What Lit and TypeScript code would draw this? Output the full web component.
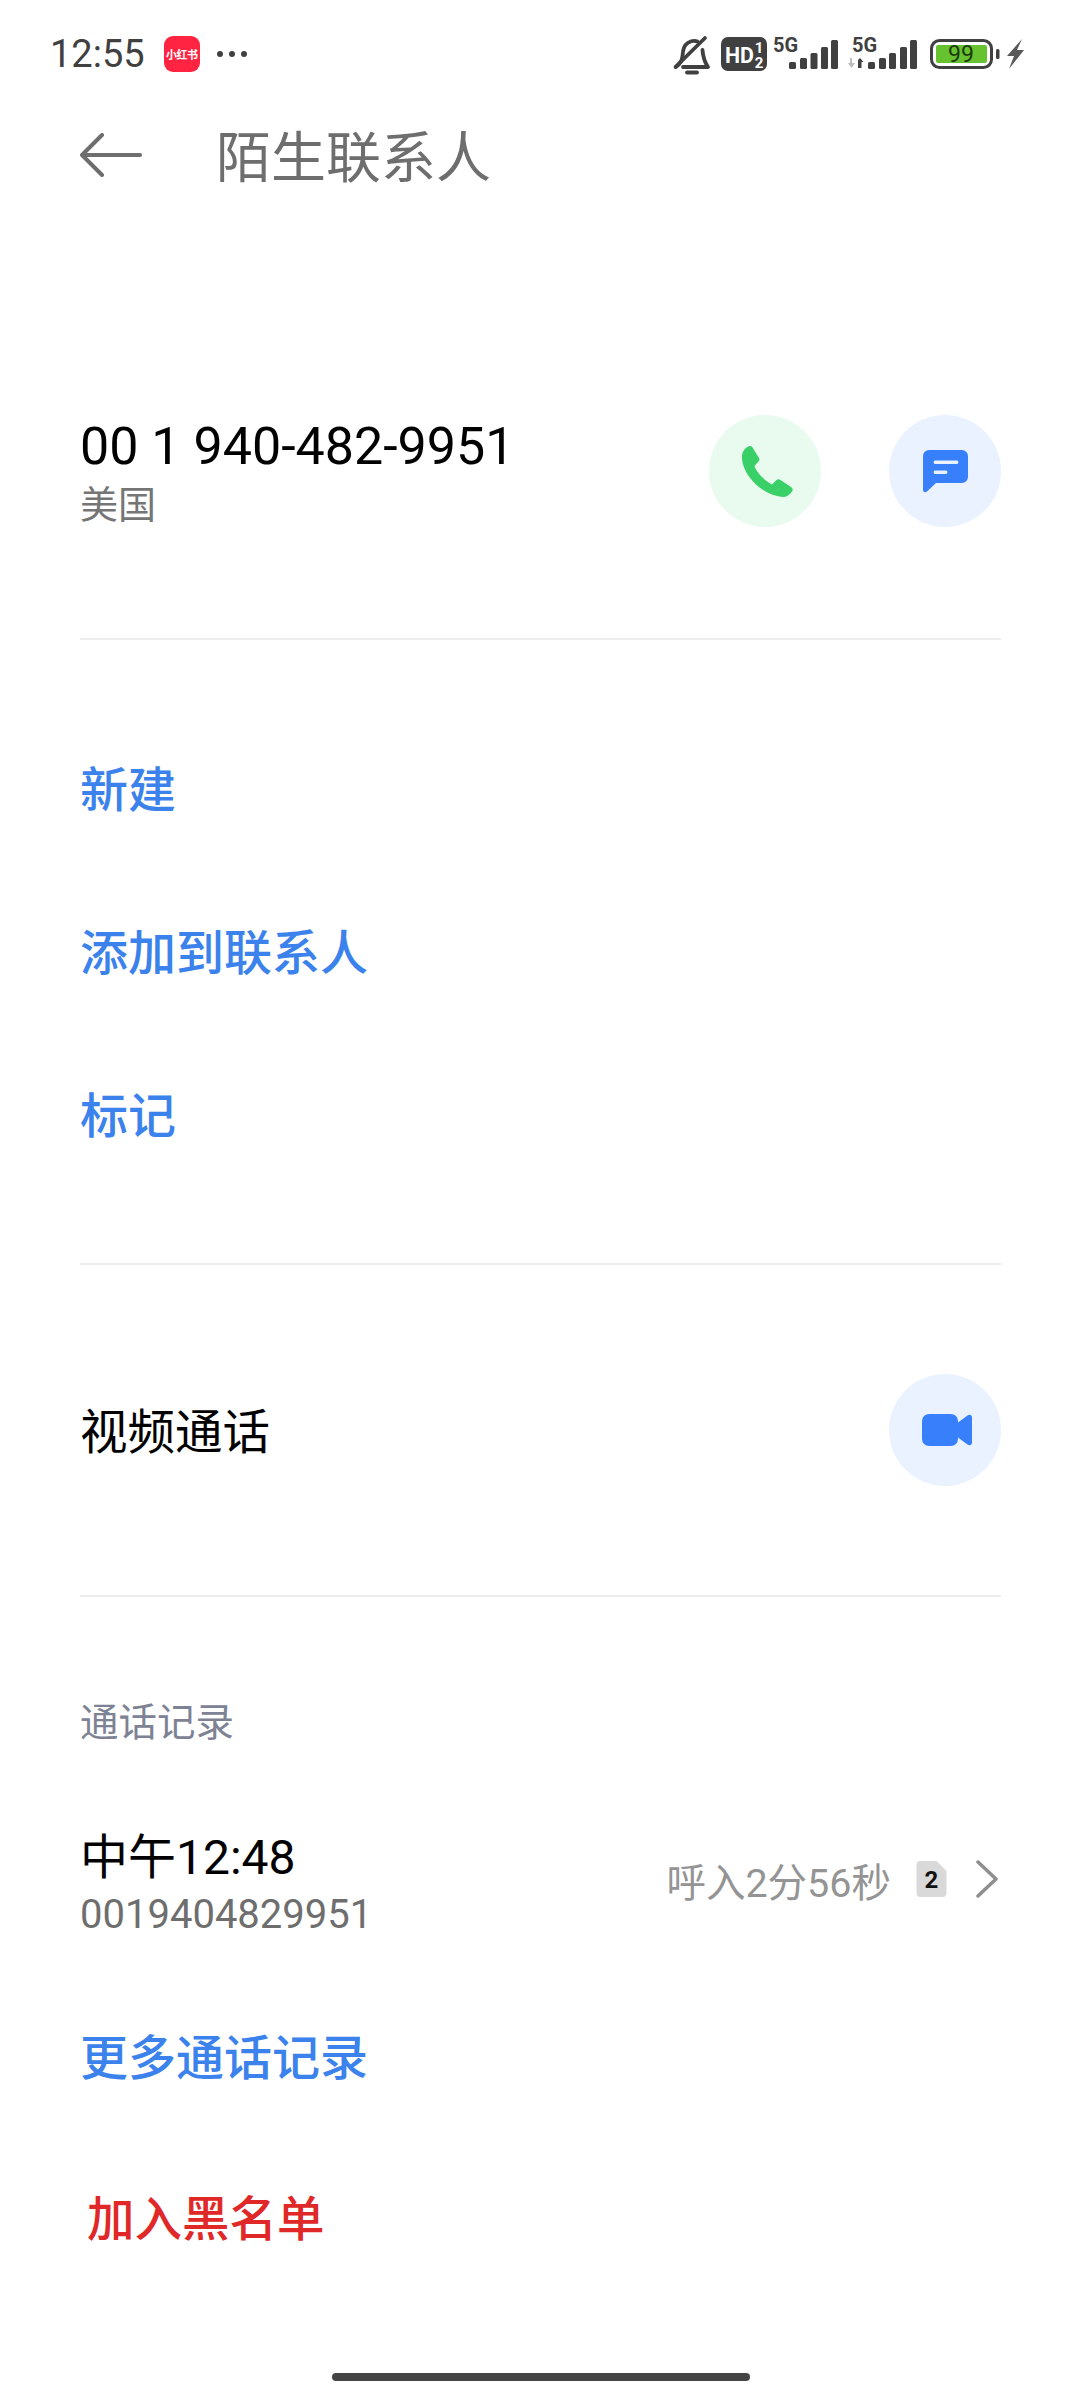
import { LitElement, html, css, svg } from 'lit';
import { customElement } from 'lit/decorators.js';

// bar tops are the same for both sims, only the x start differs
const BAR_TOPS = [62, 58, 53, 47, 40];

const signalBars = (xs: number[]) => xs.map((x, i) => svg`
  <rect x=${x} y=${BAR_TOPS[i]} width="7" height=${69 - BAR_TOPS[i]} rx="1.500"/>
`);

@customElement('app-root')
export class AppRoot extends LitElement {
  static styles = css`
    :host {
      background-color: #FFFFFF;
      color: #000000;
      display: block;
      font-family: Roboto, "Noto Sans CJK SC", sans-serif;
      height: 2400px;
      overflow: hidden;
      position: relative;
      width: 1080px;
    }

    .status {
      align-items: center;
      box-sizing: border-box;
      display: flex;
      height: 108px;
      justify-content: space-between;
      padding: 0 50px;
    }

    .status-left {
      align-items: center;
      display: flex;
    }

    .time {
      color: #404040;
      font-size: 38px;
      margin-right: 19px;
    }

    .app-icon {
      align-items: center;
      background-color: #FF2442;
      border-radius: 9px;
      color: #FFFFFF;
      display: flex;
      font-size: 11px;
      font-weight: 700;
      height: 36px;
      justify-content: center;
      letter-spacing: -0.5px;
      margin-right: 17px;
      width: 36px;
    }

    .dots {
      display: flex;
      gap: 6px;
    }

    .dots i {
      background-color: #404040;
      border-radius: 50%;
      height: 6px;
      width: 6px;
    }

    .status-icons {
      display: block;
    }

    header {
      align-items: center;
      color: #6E6E6E;
      display: flex;
      height: 94px;
      padding-left: 80px;
    }

    header svg {
      margin-right: 74px;
    }

    h1 {
      font-size: 55px;
      font-weight: 400;
      line-height: 1;
      margin: 6px 0 0;
    }

    .contact {
      align-items: center;
      border-bottom: 2px solid #EDEDED;
      display: flex;
      height: 112px;
      justify-content: space-between;
      margin: 0 79px 0 80px;
      padding: 213px 0 111px;
    }

    .contact-text {
      margin-top: 8px;
    }

    .number {
      font-size: 52px;
      line-height: 60px;
    }

    .region {
      color: #757575;
      font-size: 38px;
      line-height: 56px;
    }

    .buttons {
      display: flex;
      gap: 68px;
    }

    .circle {
      align-items: center;
      background-color: #E9F2FE;
      border-radius: 50%;
      display: flex;
      height: 112px;
      justify-content: center;
      width: 112px;
    }

    .circle.green {
      background-color: #E9FAEE;
    }

    .nudge {
      margin-left: 4px;
    }

    .actions {
      border-bottom: 2px solid #EDEDED;
      margin: 0 79px 0 80px;
      padding: 64px 0 70px;
    }

    .link {
      align-items: center;
      color: #3B82EC;
      display: flex;
      font-size: 48px;
      font-weight: 500;
      height: 163px;
    }

    .video {
      align-items: center;
      border-bottom: 2px solid #EDEDED;
      display: flex;
      font-size: 47.5px;
      justify-content: space-between;
      margin: 0 79px 0 80px;
      padding: 109px 0;
    }

    .video span {
      padding-bottom: 3px;
    }

    .log {
      padding: 0 79px 0 80px;
    }

    .log-title {
      align-items: center;
      color: #7D8394;
      display: flex;
      font-size: 38.5px;
      height: 56px;
      margin-top: 94px;
    }

    .call {
      align-items: center;
      display: flex;
      justify-content: space-between;
      margin-top: 79px;
    }

    .call-time {
      font-size: 48px;
      line-height: 64px;
    }

    .call-number {
      color: #6E6E6E;
      font-size: 40px;
      line-height: 50px;
    }

    .call-meta {
      align-items: center;
      color: #949494;
      display: flex;
      font-size: 39.5px;
      margin: 0 3px 8px 0;
    }

    .sim {
      margin: 0 29px 0 25px;
    }

    .more {
      height: 162px;
      margin-top: 33px;
    }

    .block {
      align-items: center;
      color: #E02828;
      display: flex;
      font-size: 47.5px;
      font-weight: 500;
      height: 160px;
      padding-left: 7px;
    }

    .home {
      background-color: #444444;
      border-radius: 4px;
      bottom: 19px;
      height: 8px;
      left: 332px;
      position: absolute;
      width: 418px;
    }
  `;

  renderStatusIcons() {
    return html`
      <svg class="status-icons" width="370" height="60" viewBox="660 24 370 60" fill="#404040" font-family="Roboto, sans-serif">
        <g fill="none" stroke="#404040" stroke-width="3.800" stroke-linecap="round" stroke-linejoin="round">
          <path d="M676 67c4-3 6-6 6.500-11 .5-4 .5-8 3-11 3-3.500 8-5 12-3.500"/>
          <path d="M702.500 50c.5 7 2 12 5.500 17h-25"/>
          <path d="M675.500 67 705 38"/>
          <path d="M687 72.500h10"/>
        </g>
        <rect x="721" y="37" width="46" height="34" rx="7"/>
        <text x="725" y="63" font-size="22" font-weight="700" fill="#FFFFFF" textLength="29" lengthAdjust="spacingAndGlyphs">HD</text>
        <text x="759" y="53" font-size="15" font-weight="700" fill="#FFFFFF" text-anchor="middle">1</text>
        <text x="759" y="67.500" font-size="15" font-weight="700" fill="#FFFFFF" text-anchor="middle">2</text>
        <text x="773" y="52" font-size="20" font-weight="700">5G</text>
        ${signalBars([789, 800, 810.500, 821, 831])}
        <text x="852" y="52" font-size="20" font-weight="700">5G</text>
        <path d="M852 58v5h3l-3.500 5-3.500-5h2v-5z" fill="#BDBDBD"/>
        <path d="M858 68v-8l2-2 3.500 4h-2v6z"/>
        ${signalBars([868, 879, 889, 900, 910])}
        <rect x="931.500" y="40.500" width="60" height="27" rx="8" fill="none" stroke="#404040" stroke-width="3"/>
        <rect x="936" y="45" width="51" height="18" rx="2" fill="#66C22E"/>
        <text x="961" y="62" font-size="23" fill="#1D3A0C" text-anchor="middle">99</text>
        <rect x="996" y="49" width="3.500" height="10" rx="1.500"/>
        <path d="M1022 39 1007 56h7l-5 13 15-19h-7z" fill="#595959"/>
      </svg>
    `;
  }

  render() {
    return html`
      <div class="status">
        <div class="status-left">
          <span class="time">12:55</span>
          <span class="app-icon">小红书</span>
          <span class="dots"><i></i><i></i><i></i></span>
        </div>
        ${this.renderStatusIcons()}
      </div>

      <header>
        <svg width="62" height="44" viewBox="0 0 62 44" fill="none" stroke="#6E6E6E" stroke-width="4" stroke-linecap="round" stroke-linejoin="round">
          <path d="M60 22H3"/>
          <path d="M22 2 2 22l20 20"/>
        </svg>
        <h1>陌生联系人</h1>
      </header>

      <section class="contact">
        <div class="contact-text">
          <div class="number">00 1 940-482-9951</div>
          <div class="region">美国</div>
        </div>
        <div class="buttons">
          <div class="circle green">
            <svg class="nudge" width="51" height="51" viewBox="0 0 51 51">
              <path fill="#3AD068" d="M1 6C2 3 6 0 8 0c2 0 3 2 4 4l5 8c1 2 0 3-1 4l-3.500 4C14 26 24 36 30 38.500l4-4c1.500-1.500 3-1.500 4.500-.5L49 41c2 1.500 2 3 1 4.500-2 2.500-5 5.500-8 5.500C20 50-1 28 0 10c0-1.500.5-3 1-4Z"/>
            </svg>
          </div>
          <div class="circle">
            <svg width="45" height="43" viewBox="0 0 45 43">
              <path fill="#3880FB" fill-rule="evenodd" d="M6 0h33a6 6 0 0 1 6 6v21a6 6 0 0 1-6 6H13L4 41.500c-1.500 1.300-4 .5-4-1.500V6a6 6 0 0 1 6-6Zm6 10.500a1.800 1.800 0 0 0 0 3.500h22a1.800 1.800 0 0 0 0-3.500H12Zm0 10a1.800 1.800 0 0 0 0 3.500h11a1.800 1.800 0 0 0 0-3.500H12Z"/>
            </svg>
          </div>
        </div>
      </section>

      <section class="actions">
        <div class="link">新建</div>
        <div class="link">添加到联系人</div>
        <div class="link">标记</div>
      </section>

      <section class="video">
        <span>视频通话</span>
        <div class="circle">
          <svg class="nudge" width="50" height="32" viewBox="0 0 50 32">
            <path fill="#3880FB" d="M7 0h22a7 7 0 0 1 7 7v1.500L45.500 1.500C47.500 0 50 1 50 3.500v25c0 2.500-2.500 3.500-4.500 2L36 23.500V25a7 7 0 0 1-7 7H7a7 7 0 0 1-7-7V7a7 7 0 0 1 7-7Z"/>
          </svg>
        </div>
      </section>

      <section class="log">
        <div class="log-title">通话记录</div>
        <div class="call">
          <div>
            <div class="call-time">中午12:48</div>
            <div class="call-number">0019404829951</div>
          </div>
          <div class="call-meta">
            <span>呼入2分56秒</span>
            <svg class="sim" width="31" height="36" viewBox="0 0 30 36" font-family="Roboto, sans-serif">
              <path fill="#D9D9D9" d="M4 0h16l10 10v22a4 4 0 0 1-4 4H4a4 4 0 0 1-4-4V4a4 4 0 0 1 4-4Z"/>
              <text x="15" y="27" font-size="24" font-weight="700" fill="#111111" text-anchor="middle">2</text>
            </svg>
            <svg width="22" height="38" viewBox="0 0 22 38" fill="none" stroke="#8E8E8E" stroke-width="3.500" stroke-linecap="round" stroke-linejoin="round">
              <path d="M2 2l18 17L2 36"/>
            </svg>
          </div>
        </div>
        <div class="link more">更多通话记录</div>
        <div class="block">加入黑名单</div>
      </section>

      <div class="home"></div>
    `;
  }
}
